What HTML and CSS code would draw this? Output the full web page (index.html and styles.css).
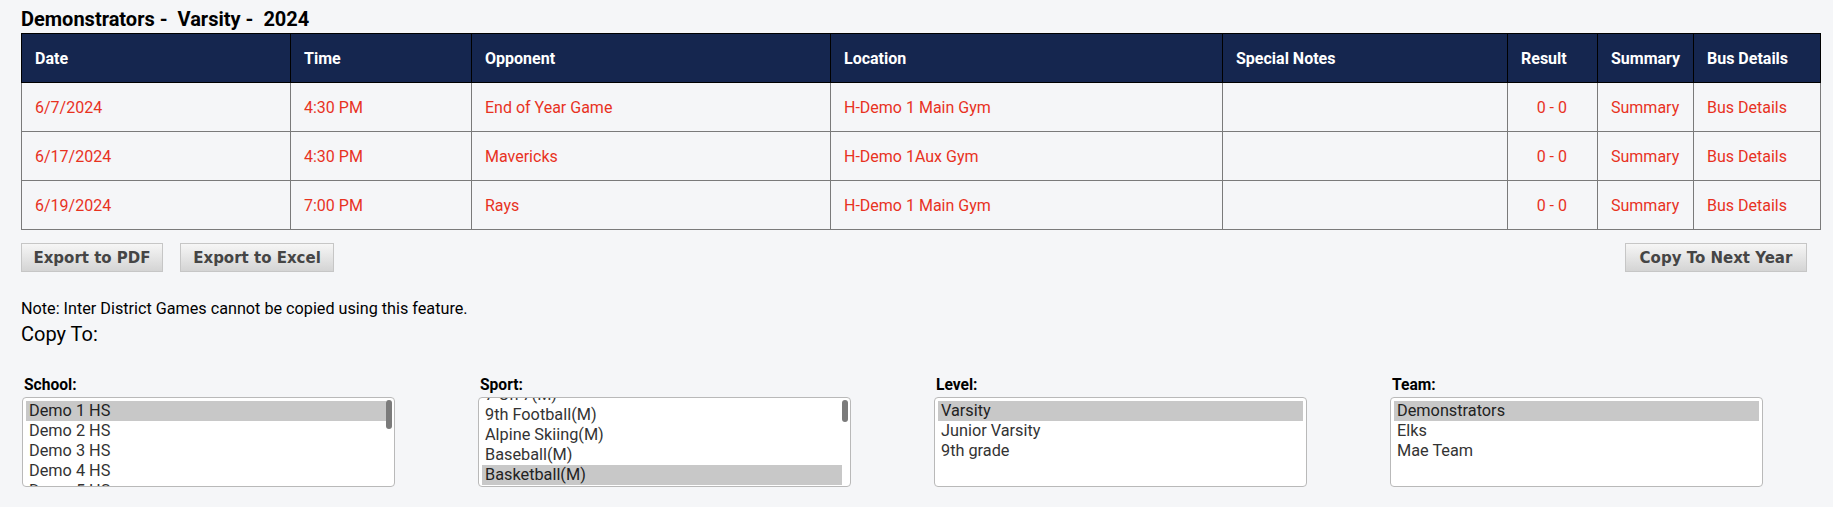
FILE: index.html
```html
<!DOCTYPE html>
<html lang="en">
<head>
<meta charset="utf-8">
<title>Schedule - Demonstrators Varsity 2024</title>
<link rel="stylesheet" href="styles.css">
</head>
<body>
<div class="page">
  <h1 class="title">Demonstrators -&nbsp; Varsity -&nbsp; 2024</h1>
  <table class="schedule">
    <colgroup>
      <col class="c-date"><col class="c-time"><col class="c-opp"><col class="c-loc">
      <col class="c-notes"><col class="c-result"><col class="c-summary"><col class="c-bus">
    </colgroup>
    <thead>
      <tr>
        <th>Date</th><th>Time</th><th>Opponent</th><th>Location</th>
        <th>Special Notes</th><th>Result</th><th>Summary</th><th>Bus Details</th>
      </tr>
    </thead>
    <tbody>
      <tr>
        <td>6/7/2024</td><td>4:30 PM</td><td>End of Year Game</td><td>H-Demo 1 Main Gym</td>
        <td></td><td class="result">0 - 0</td><td>Summary</td><td>Bus Details</td>
      </tr>
      <tr>
        <td>6/17/2024</td><td>4:30 PM</td><td>Mavericks</td><td>H-Demo 1Aux Gym</td>
        <td></td><td class="result">0 - 0</td><td>Summary</td><td>Bus Details</td>
      </tr>
      <tr>
        <td>6/19/2024</td><td>7:00 PM</td><td>Rays</td><td>H-Demo 1 Main Gym</td>
        <td></td><td class="result">0 - 0</td><td>Summary</td><td>Bus Details</td>
      </tr>
    </tbody>
  </table>

  <div class="actions">
    <div class="actions-left">
      <button class="btn btn-pdf">Export to PDF</button>
      <button class="btn btn-excel">Export to Excel</button>
    </div>
    <button class="btn btn-copy">Copy To Next Year</button>
  </div>

  <p class="note">Note: Inter District Games cannot be copied using this feature.</p>
  <h2 class="copy-to">Copy To:</h2>

  <div class="fields">
    <div class="field">
      <div class="label">School:</div>
      <div class="listbox scrollable">
        <div class="opts">
          <div class="opt sel">Demo 1 HS</div>
          <div class="opt">Demo 2 HS</div>
          <div class="opt">Demo 3 HS</div>
          <div class="opt">Demo 4 HS</div>
          <div class="opt">Demo 5 HS</div>
        </div>
        <div class="thumb thumb-school"></div>
      </div>
    </div>
    <div class="field">
      <div class="label">Sport:</div>
      <div class="listbox scrollable">
        <div class="opts scrolled">
          <div class="opt">7 On 7(M)</div>
          <div class="opt">9th Football(M)</div>
          <div class="opt">Alpine Skiing(M)</div>
          <div class="opt">Baseball(M)</div>
          <div class="opt sel">Basketball(M)</div>
        </div>
        <div class="thumb thumb-sport"></div>
      </div>
    </div>
    <div class="field">
      <div class="label">Level:</div>
      <div class="listbox">
        <div class="opts">
          <div class="opt sel">Varsity</div>
          <div class="opt">Junior Varsity</div>
          <div class="opt">9th grade</div>
        </div>
      </div>
    </div>
    <div class="field">
      <div class="label">Team:</div>
      <div class="listbox">
        <div class="opts">
          <div class="opt sel">Demonstrators</div>
          <div class="opt">Elks</div>
          <div class="opt">Mae Team</div>
        </div>
      </div>
    </div>
  </div>
</div>
</body>
</html>
```

FILE: styles.css
```css
html, body {
  margin: 0;
  padding: 0;
  background: #f5f6f8;
}

body {
  font-family: Roboto, "Liberation Sans", Arial, sans-serif;
  color: #000;
}

.page {
  padding: 7px 0 0 21px;
  width: 1799px;
}

.title {
  margin: 0 0 2px 0;
  font-size: 20px;
  line-height: 24px;
  font-weight: 700;
  color: #000;
}

/* ---------- schedule table ---------- */
.schedule {
  width: 1799px;
  table-layout: fixed;
  border-collapse: collapse;
  font-size: 16px;
}

.c-date { width: 269px; }
.c-time { width: 181px; }
.c-opp { width: 359px; }
.c-loc { width: 392px; }
.c-notes { width: 285px; }
.c-result { width: 90px; }
.c-summary { width: 96px; }
.c-bus { width: 127px; }

.schedule th {
  height: 48px;
  padding: 0 13px;
  background: #15264f;
  color: #fff;
  font-weight: 700;
  text-align: left;
  border: 1px solid #000;
  white-space: nowrap;
}

.schedule td {
  height: 48px;
  padding: 0 13px;
  color: #e8321f;
  border: 1px solid #7a7a7a;
  white-space: nowrap;
}

.schedule td.result {
  text-align: right;
  padding-right: 30px;
}

/* ---------- action buttons ---------- */
.actions {
  margin-top: 13px;
  display: flex;
  justify-content: space-between;
  padding-right: 13px;
}

.actions-left {
  display: flex;
  gap: 17px;
}

.btn {
  height: 29px;
  box-sizing: border-box;
  padding: 0 10px;
  border: 1px solid #c6c6c6;
  border-radius: 0;
  background: linear-gradient(#f6f6f6, #d4d4d4);
  font-family: "DejaVu Sans", Verdana, sans-serif;
  font-weight: 700;
  font-size: 15px;
  color: #454545;
  cursor: pointer;
}

.btn-pdf { width: 142px; }
.btn-excel { width: 154px; }
.btn-copy { width: 182px; }

/* ---------- copy section ---------- */
.note {
  margin: 27px 0 0 0;
  font-size: 16.2px;
  line-height: 19px;
  color: #000;
}

.copy-to {
  margin: 5px 0 0 0;
  font-size: 20px;
  line-height: 22px;
  font-weight: 400;
  color: #000;
}

.fields {
  margin-top: 31px;
  display: grid;
  grid-template-columns: repeat(4, 456px);
  padding-left: 1px;
}

.label {
  padding-left: 2px;
  font-size: 15.6px;
  line-height: 18px;
  font-weight: 700;
  margin-bottom: 3px;
}

.listbox {
  position: relative;
  width: 373px;
  height: 90px;
  box-sizing: border-box;
  border: 1px solid #b9b9b9;
  border-radius: 4px;
  background: #fff;
  padding: 3px;
  overflow: hidden;
}

.scrollable .opts {
  margin-right: 5px;
}

.opts.scrolled {
  margin-top: -16px;
}

.opt {
  height: 20px;
  line-height: 20px;
  padding-left: 3px;
  font-size: 16.3px;
  color: #333;
  white-space: nowrap;
}

.opt.sel {
  background: #c8c8c8;
  color: #222;
}

.thumb {
  position: absolute;
  right: 2px;
  top: 2px;
  width: 6px;
  border-radius: 3px;
  background: #7b7b7b;
}

.thumb-school { height: 29px; }
.thumb-sport { height: 22px; }
```
